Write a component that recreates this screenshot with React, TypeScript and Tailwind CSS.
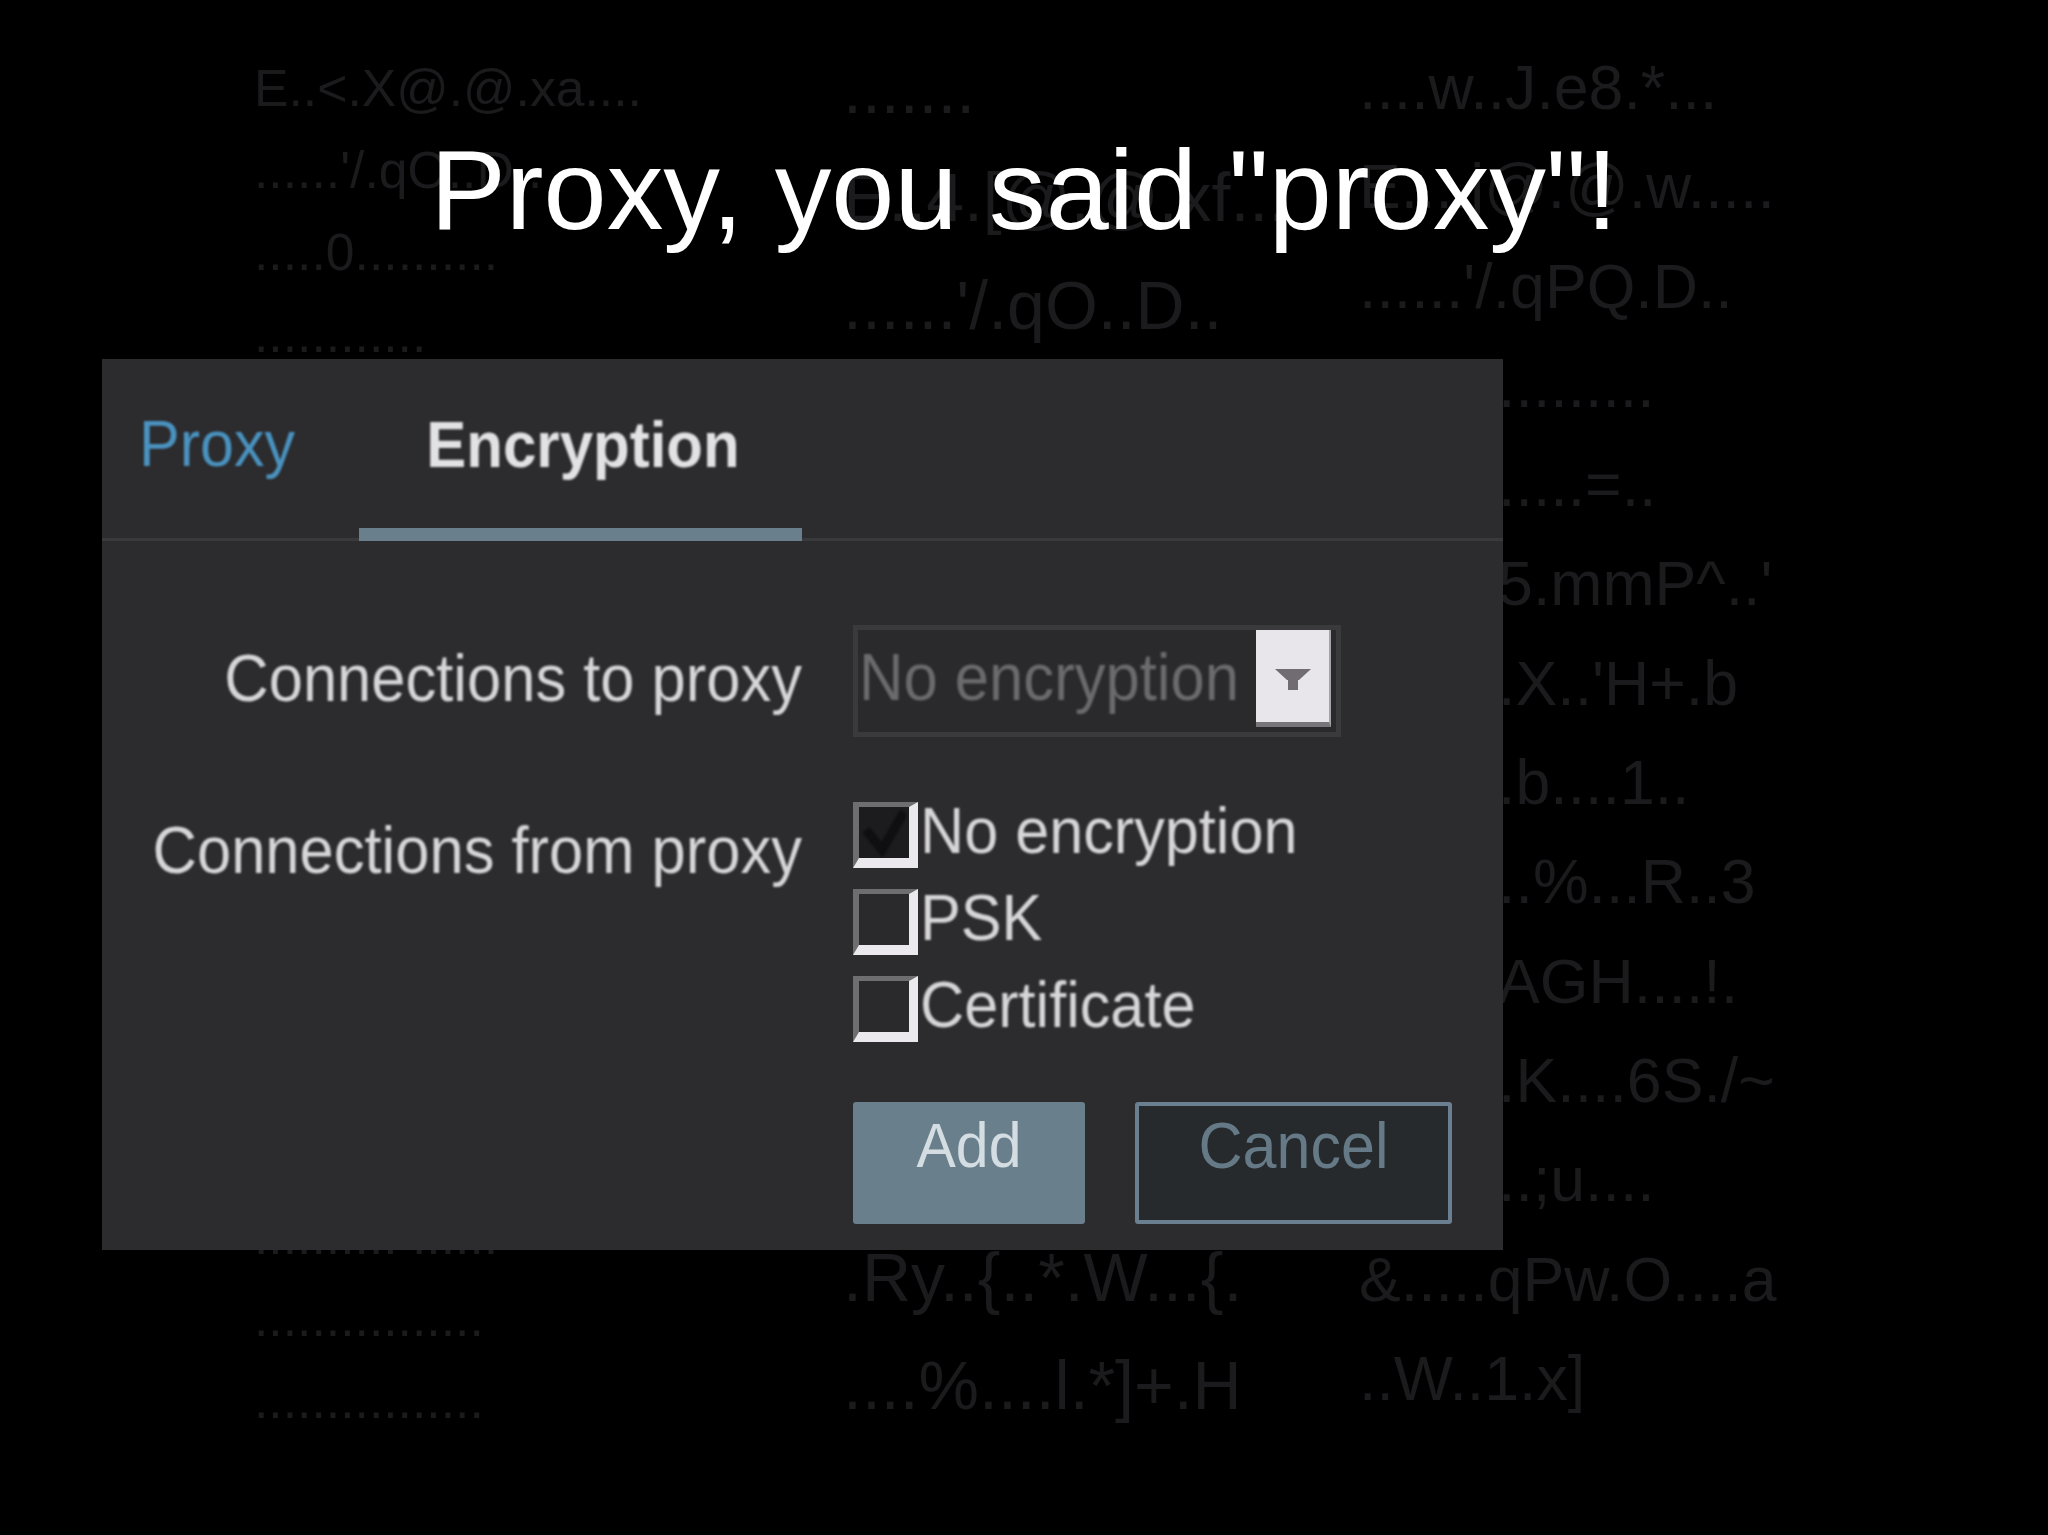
import React from "react";

const col1 = [
  "E..<.X@.@.xa....",
  "......'/.qO..D..",
  ".....0..........",
  "............",
  "....K...........",
  "................",
  "...............",
  "................",
  "................",
  "................",
  "................",
  "................",
  "................",
  "................",
  ".......... ......",
  "................",
  "................",
];
const col2 = [
  ".......",
  "E..4.[@.@.xf...",
  "......'/.qO..D..",
  "........",
  "......=..",
  "...5.mmP^..'",
  "..X..'H+.b",
  "..b....1..",
  "..%...R..3",
  "..AGH....!.",
  "..K....6S./~",
  ".Ry..{..*.W...{.",
  "....%....l.*]+.H",
];
const col3 = [
  "....w..J.e8.*...",
  "E....j@.@.w.....",
  "......'/.qPQ.D..",
  ".................",
  ".............=..",
  "........5.mmP^..'",
  ".........X..'H+.b",
  ".........b....1..",
  "..........%...R..3",
  "........AGH....!.",
  ".........K....6S./~",
  "..........;u....",
  "&.....qPw.O....a",
  "..W..1.x]",
];

function Checkbox({ label, checked }: { label: string; checked?: boolean }) {
  return (
    <div className="flex items-start h-[66px]">
      <div className={`w-[65px] h-[66px] shrink-0 border-t-[5px] border-l-[6px] border-r-[9px] border-b-[10px] border-t-[#6e6d6f] border-l-[#6e6d6f] border-r-[#ebe9ed] border-b-[#ebe9ed] flex items-center justify-center ${checked ? "bg-[#1c1b1d]" : "bg-[#2a292b]"}`}>
        {checked && (
          <svg width="44" height="46" viewBox="0 0 44 46" className="blur-[1px]">
            <path d="M4 20 L20 40 L42 2" fill="none" stroke="#0f0e10" strokeWidth="9" />
          </svg>
        )}
      </div>
      <span className="ml-[2px] text-[61.2px] leading-[58px] text-[#d6d5d7] blur-[0.8px] scale-y-[1.07] origin-left">{label}</span>
    </div>
  );
}

export default function App() {
  return (
    <div className="relative w-[2048px] h-[1535px] overflow-hidden bg-black font-['Liberation_Sans',Arial,sans-serif]">
      <div className="absolute inset-0 flex pl-[254px] text-[#1b1a1c] whitespace-pre blur-[0.5px]">
        <div className="w-[589px] pt-[47px] text-[51.7px] leading-[82px]">
          {col1.map((t, i) => <div key={i}>{t}</div>)}
        </div>
        <div className="w-[516px] pt-[35px] text-[68px] leading-[108px]">
          {col2.map((t, i) => <div key={i}>{t}</div>)}
        </div>
        <div className="pt-[38px] text-[62.6px] leading-[99.3px]">
          {col3.map((t, i) => <div key={i}>{t}</div>)}
        </div>
      </div>

      <div className="relative pt-[125px]">
        <h1 className="text-center text-white text-[113.4px] leading-[129px] font-normal whitespace-pre">Proxy, you said "proxy"!</h1>

        <div className="mt-[105px] ml-[102px] w-[1401px] h-[891px] bg-[#2c2b2d]">
          <div className="relative flex h-[182px] border-b-[3px] border-[#3a393b]">
            <div className="pl-[37px] pt-[50px] w-[257px] text-[61px] leading-[70px] text-[#4a93c0] blur-[0.8px] scale-y-[1.07] origin-left">Proxy</div>
            <div className="relative w-[443px] h-[179px] text-center">
              <div className="pt-[50px] pl-[5px] text-[60px] leading-[70px] font-bold text-[#e2e1e3] blur-[0.8px] scale-y-[1.07]">Encryption</div>
              <div className="absolute left-0 right-0 bottom-[-3px] h-[13px] bg-[#6a7f8c]" />
            </div>
          </div>

          <div className="grid grid-cols-[700px_auto] gap-x-[51px] pt-[84px]">
            <div className="flex items-center justify-end h-[108px] text-[61.5px] leading-[70px] text-[#d6d5d7] blur-[0.8px] scale-y-[1.07]">Connections to proxy</div>
            <div className="flex w-[488px] h-[112px] border-[5px] border-[#3a393b] bg-[#2a292b]">
              <span className="w-[398px] pl-[1px] pt-[13px] text-[61.6px] leading-[70px] text-[#6b6a6c] blur-[0.8px] scale-y-[1.07]">No encryption</span>
              <div className="flex items-center justify-center w-[75px] h-[97px] bg-[#e8e6ea] border-b-[5px] border-r-[2px] border-b-[#77757a] border-r-[#a5a3a7]">
                <svg width="36" height="21" viewBox="0 0 36 21" className="mt-[6px]">
                  <path d="M0 0 H36 L24 11 H23 V21 H13 V11 H12 Z" fill="#716c72" />
                </svg>
              </div>
            </div>

            <div className="mt-[79px] text-right text-[61.5px] leading-[70px] text-[#d6d5d7] blur-[0.8px] scale-y-[1.07] self-start">Connections from proxy</div>
            <div className="mt-[65px] flex flex-col gap-[21px]">
              <Checkbox label="No encryption" checked />
              <Checkbox label="PSK" />
              <Checkbox label="Certificate" />
              <div className="mt-[39px] flex gap-[50px]">
                <div className="w-[232px] h-[122px] rounded-[3px] bg-[#697f8c] text-center">
                  <div className="pt-[8px] text-[59px] leading-[70px] text-[#d4dde2] blur-[0.6px] scale-y-[1.07]">Add</div>
                </div>
                <div className="w-[317px] h-[122px] rounded-[3px] border-[4px] border-[#6a8090] bg-[#262a2c] text-center">
                  <div className="pt-[4px] text-[61px] leading-[70px] text-[#657a86] blur-[0.6px] scale-y-[1.07]">Cancel</div>
                </div>
              </div>
            </div>
          </div>
        </div>
      </div>
    </div>
  );
}
